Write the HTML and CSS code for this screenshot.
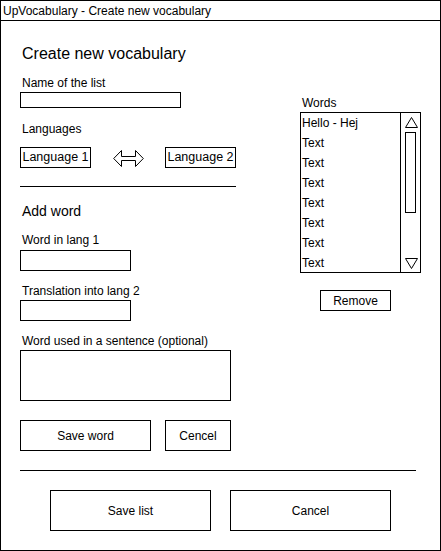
FILE: index.html
```html
<!DOCTYPE html>
<html>
<head>
<meta charset="utf-8">
<title>UpVocabulary</title>
<link rel="stylesheet" href="styles.css">
</head>
<body>
<div class="frame">
  <div class="titlebar">UpVocabulary - Create new vocabulary</div>
  <div class="content">
    <div class="top">
      <div class="left">
        <div class="heading">Create new vocabulary</div>
        <div class="label m12">Name of the list</div>
        <div class="field name-field m2"></div>
        <div class="label m14">Languages</div>
        <div class="lang-row">
          <div class="lang-box">Language 1</div>
          <svg class="swap" width="31" height="19" viewBox="0 0 31 19">
            <path d="M0.7,9.5 L8.5,1.5 L8.5,7.5 L22.5,7.5 L22.5,1.5 L30.3,9.5 L22.5,17.5 L22.5,11.5 L8.5,11.5 L8.5,17.5 Z" fill="#fff" stroke="#000" stroke-width="1"/>
          </svg>
          <div class="lang-box">Language 2</div>
        </div>
        <div class="rule short"></div>
        <div class="subheading">Add word</div>
        <div class="label m14">Word in lang 1</div>
        <div class="field word-field m3"></div>
        <div class="label m13">Translation into lang 2</div>
        <div class="field word-field m2"></div>
        <div class="label m13">Word used in a sentence (optional)</div>
        <div class="field sentence-field m2"></div>
        <div class="btn-row">
          <div class="btn save-word">Save word</div>
          <div class="btn cencel">Cencel</div>
        </div>
      </div>
      <div class="right">
        <div class="label">Words</div>
        <div class="list">
          <div class="items">
            <div class="item">Hello - Hej</div>
            <div class="item">Text</div>
            <div class="item">Text</div>
            <div class="item">Text</div>
            <div class="item">Text</div>
            <div class="item">Text</div>
            <div class="item">Text</div>
            <div class="item">Text</div>
          </div>
          <div class="scrollbar">
            <svg width="19" height="159" viewBox="0 0 19 159">
              <path d="M10.5,4.5 L4.5,14.5 L16.5,14.5 Z" fill="none" stroke="#000" stroke-width="1"/>
              <rect x="4.5" y="19.5" width="10" height="80" fill="#fff" stroke="#000" stroke-width="1"/>
              <path d="M4.5,145.5 L16.5,145.5 L10.5,155.5 Z" fill="none" stroke="#000" stroke-width="1"/>
            </svg>
          </div>
        </div>
        <div class="btn remove">Remove</div>
      </div>
    </div>
    <div class="rule long"></div>
    <div class="footer">
      <div class="btn big">Save list</div>
      <div class="btn big">Cancel</div>
    </div>
  </div>
</div>
</body>
</html>
```
FILE: styles.css
```css
* { box-sizing: border-box; }
html, body { margin: 0; padding: 0; background: #fff; }
body {
  font-family: "Liberation Sans", Arial, sans-serif;
  font-size: 12px;
  color: #000;
}
.frame {
  width: 441px;
  height: 551px;
  border: 1px solid #000;
}
.titlebar {
  height: 20px;
  padding-left: 2px;
  padding-top: 1px;
  border-bottom: 1px solid #000;
  line-height: 18px;
}
.content {
  padding-left: 19px;
}
.top {
  display: flex;
}
.left {
  width: 216px;
  display: flex;
  flex-direction: column;
  align-items: flex-start;
}
.right {
  margin-left: 64px;
  padding-top: 75px;
  display: flex;
  flex-direction: column;
  align-items: flex-start;
}
.heading {
  margin-top: 23px;
  margin-left: 2px;
  font-size: 16px;
  line-height: 20px;
}
.subheading {
  margin-top: 16px;
  margin-left: 2px;
  font-size: 14px;
  line-height: 16px;
}
.label {
  line-height: 14px;
  margin-left: 2px;
}
.m2 { margin-top: 2px; }
.m3 { margin-top: 3px; }
.m12 { margin-top: 12px; }
.m13 { margin-top: 13px; }
.m14 { margin-top: 14px; }
.field { border: 1px solid #000; }
.name-field { width: 161px; height: 16px; }
.word-field { width: 111px; height: 21px; }
.sentence-field { width: 211px; height: 51px; }
.lang-row {
  margin-top: 11px;
  width: 216px;
  display: flex;
  align-items: center;
  justify-content: space-between;
}
.lang-box {
  width: 71px;
  height: 21px;
  border: 1px solid #000;
  line-height: 19px;
  text-align: center;
  white-space: nowrap;
  font-size: 12.5px;
}
.swap { display: block; margin-top: 1px; }
.rule { height: 1px; background: #000; }
.rule.short { width: 216px; margin-top: 18px; }
.rule.long { width: 396px; margin-top: 19px; }
.btn {
  border: 1px solid #000;
  display: flex;
  align-items: center;
  justify-content: center;
}
.btn-row {
  margin-top: 19px;
  display: flex;
  gap: 14px;
}
.save-word { width: 131px; height: 31px; }
.cencel { width: 66px; height: 31px; }
.remove { width: 71px; height: 21px; margin-top: 17px; margin-left: 20px; }
.list {
  margin-top: 2px;
  width: 121px;
  height: 161px;
  border: 1px solid #000;
  display: flex;
}
.items {
  width: 99px;
  padding-top: 0;
  padding-left: 1px;
}
.item { line-height: 20px; height: 20px; }
.scrollbar {
  border-left: 1px solid #000;
  width: 20px;
}
.scrollbar svg { display: block; }
.footer {
  margin-top: 19px;
  margin-left: 30px;
  display: flex;
  gap: 19px;
}
.big { width: 161px; height: 41px; }
```
